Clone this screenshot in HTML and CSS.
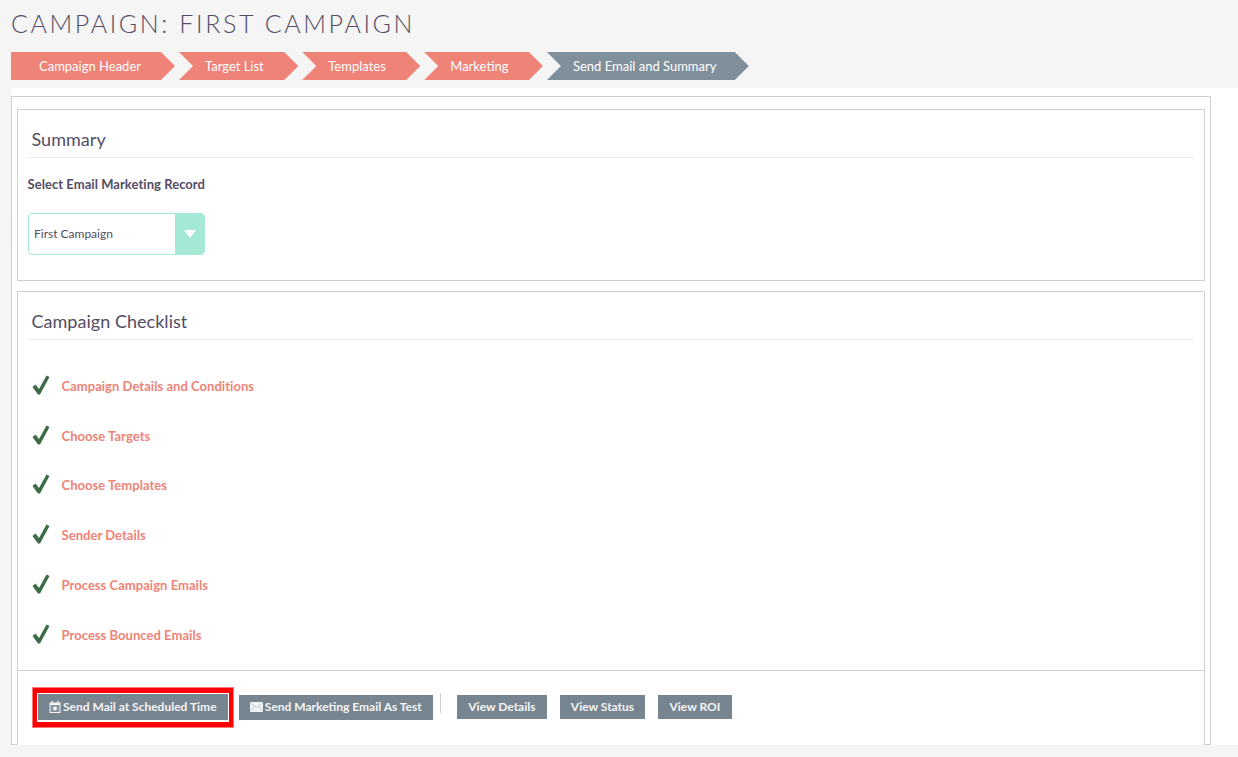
FILE: index.html
```html
<!DOCTYPE html>
<html lang="en">
<head>
<meta charset="utf-8">
<title>Campaign: First Campaign</title>
<link rel="stylesheet" href="styles.css">
</head>
<body>
<header class="page-head">
  <h1 class="page-title">CAMPAIGN: FIRST CAMPAIGN</h1>
  <nav class="steps">
    <a class="step step-first">Campaign Header</a>
    <a class="step">Target List</a>
    <a class="step">Templates</a>
    <a class="step">Marketing</a>
    <a class="step step-current">Send Email and Summary</a>
  </nav>
</header>
<main class="band">
  <div class="outer">
    <section class="panel panel-summary">
      <h2 class="panel-title">Summary</h2>
      <label class="field-label">Select Email Marketing Record</label>
      <div class="select">
        <span class="select-value">First Campaign</span>
        <span class="select-btn"><span class="select-arrow"></span></span>
      </div>
    </section>
    <section class="panel panel-check">
      <h2 class="panel-title">Campaign Checklist</h2>
      <ul class="checklist">
        <li class="check-item"><svg class="tick" viewBox="0 0 18 20"><path d="M0.5 12 L3.5 9.5 L7 14 L14.5 0.5 L17.5 2 L8 19.5 L6 19.5 Z"/></svg><a class="check-link">Campaign Details and Conditions</a></li>
        <li class="check-item"><svg class="tick" viewBox="0 0 18 20"><path d="M0.5 12 L3.5 9.5 L7 14 L14.5 0.5 L17.5 2 L8 19.5 L6 19.5 Z"/></svg><a class="check-link">Choose Targets</a></li>
        <li class="check-item"><svg class="tick" viewBox="0 0 18 20"><path d="M0.5 12 L3.5 9.5 L7 14 L14.5 0.5 L17.5 2 L8 19.5 L6 19.5 Z"/></svg><a class="check-link">Choose Templates</a></li>
        <li class="check-item"><svg class="tick" viewBox="0 0 18 20"><path d="M0.5 12 L3.5 9.5 L7 14 L14.5 0.5 L17.5 2 L8 19.5 L6 19.5 Z"/></svg><a class="check-link">Sender Details</a></li>
        <li class="check-item"><svg class="tick" viewBox="0 0 18 20"><path d="M0.5 12 L3.5 9.5 L7 14 L14.5 0.5 L17.5 2 L8 19.5 L6 19.5 Z"/></svg><a class="check-link">Process Campaign Emails</a></li>
        <li class="check-item"><svg class="tick" viewBox="0 0 18 20"><path d="M0.5 12 L3.5 9.5 L7 14 L14.5 0.5 L17.5 2 L8 19.5 L6 19.5 Z"/></svg><a class="check-link">Process Bounced Emails</a></li>
      </ul>
      <div class="actions">
        <span class="highlight">
          <button class="btn btn-sched"><svg class="btn-icon" viewBox="0 0 12 12"><path class="ico-fill" d="M0.5 1.5H11.5V12H0.5Z"/><path class="ico-cut" d="M1.5 4H10.5V11H1.5Z"/><path class="ico-fill" d="M2.5 0H4V2.5H2.5ZM8 0H9.5V2.5H8Z"/><circle class="ico-fill" cx="6" cy="7.5" r="2"/></svg>Send Mail at Scheduled Time</button>
        </span>
        <button class="btn btn-test"><svg class="btn-icon btn-icon-mail" viewBox="0 0 13 10"><path class="ico-fill" d="M0 0H13V10H0Z"/><path class="ico-line" d="M0 0.5L6.5 5.5L13 0.5M0 9.5L4.5 4M13 9.5L8.5 4"/></svg>Send Marketing Email As Test</button>
        <span class="sep"></span>
        <button class="btn btn-view btn-view-first">View Details</button>
        <button class="btn btn-view">View Status</button>
        <button class="btn btn-view">View ROI</button>
      </div>
    </section>
  </div>
</main>
</body>
</html>
```
FILE: styles.css
```css
* { box-sizing: border-box; }
html, body { margin: 0; padding: 0; height: 757px; overflow: hidden; }
body {
  background: #f5f5f5;
  font-family: Lato, "Open Sans", sans-serif;
  color: #534d64;
}
.page-head { height: 88px; padding: 8px 0 0 11px; }
.page-title {
  margin: 0;
  font-size: 25px;
  line-height: 30px;
  font-weight: 300;
  letter-spacing: 2.62px;
  color: #534d64;
}
.steps { display: flex; gap: 4px; margin-top: 14px; }
.step {
  height: 28px;
  line-height: 28px;
  padding: 0 34.5px 0 26px;
  font-size: 13px;
  color: #fff;
  background: #f08377;
  clip-path: polygon(0 0, calc(100% - 14px) 0, 100% 50%, calc(100% - 14px) 100%, 0 100%, 14px 50%);
}
.step-first {
  padding-left: 28px;
  padding-right: 34px;
  clip-path: polygon(0 0, calc(100% - 14px) 0, 100% 50%, calc(100% - 14px) 100%, 0 100%);
}
.step-current { background: #7f8f9c; padding-right: 32.4px; }
.band {
  margin-left: 11px;
  height: 657px;
  padding-top: 8px;
  background: linear-gradient(#fff 657px, #f5f5f5 657px);
}
.outer {
  width: 1200px;
  height: 649px;
  border: 1px solid #d0d0d0;
  padding: 12px 5px 0;
  background: #fff;
}
.panel { border: 1px solid #d0d0d0; background: #fff; }
.panel-summary { height: 172px; padding: 0 10px; }
.panel-check { height: 454px; margin-top: 10px; border-bottom: 0; }
.panel-title {
  margin: 0;
  height: 48px;
  padding: 18px 0 0 3.5px;
  font-size: 18px;
  line-height: 22px;
  font-weight: 400;
  letter-spacing: 0.03px;
  color: #534d64;
  border-bottom: 1px solid #ececec;
}
.panel-check .panel-title { margin: 0 10px; }
.field-label {
  display: block;
  margin-top: 18px;
  margin-left: -0.5px;
  font-size: 13px;
  line-height: 17px;
  font-weight: 700;
  letter-spacing: 0.05px;
}
.select {
  display: flex;
  width: 177px;
  height: 42px;
  margin-top: 20px;
  border: 1px solid #a5e8d6;
  border-radius: 4px;
  overflow: hidden;
}
.select-value { flex: 1; padding-left: 5px; font-size: 12px; line-height: 39px; color: #534d64; }
.select-btn {
  display: flex;
  align-items: center;
  justify-content: center;
  width: 29px;
  background: #a5e8d6;
}
.select-arrow {
  width: 0;
  height: 0;
  border-left: 6.5px solid transparent;
  border-right: 6.5px solid transparent;
  border-top: 8px solid #fff;
}
.checklist { list-style: none; margin: 0; padding: 21px 0 0 14px; height: 330px; }
.check-item { display: flex; align-items: center; height: 49.8px; }
.tick { width: 18px; height: 20px; margin: -2px 11.5px 0 0; flex: none; }
.tick path { fill: #3d6b45; }
.check-link { font-size: 13px; font-weight: 700; letter-spacing: 0.04px; color: #f08377; }
.actions {
  display: flex;
  align-items: flex-start;
  height: 73px;
  padding: 17px 0 0 15px;
  border-top: 1px solid #d0d0d0;
}
.highlight {
  display: flex;
  padding: 1px 1px 2px 1px;
  border: 4px solid #f00;
  border-top-width: 5px;
  border-bottom-width: 5px;
  outline: 1px solid #f77;
  background: #fff;
  margin-right: 6px;
}
.btn {
  display: flex;
  align-items: center;
  height: 24px;
  border: 0;
  padding: 0 11.25px 2px;
  margin-top: 7px;
  background: #778591;
  color: #f5f5f5;
  font-family: inherit;
  font-size: 12px;
  font-weight: 700;
}
.btn-sched { height: 26px; margin-top: 0; padding: 0 11px 2px; }
.btn-test { height: 25px; margin-right: 7px; }
.btn-view { margin-left: 12.8px; }
.btn-view-first { margin-left: 16px; }
.sep { width: 1px; height: 20px; background: #d0d0d0; margin: 5px 0 0; }
.btn-icon { width: 12px; height: 12px; margin: 2px 2px 0 0; flex: none; }
.btn-icon-mail { width: 13px; height: 10px; margin: 0 2px 0 0; }
.ico-fill { fill: #f0f2f4; }
.ico-cut { fill: #8694a0; }
.ico-line { fill: none; stroke: #b0bac2; stroke-width: 0.7; }
```
